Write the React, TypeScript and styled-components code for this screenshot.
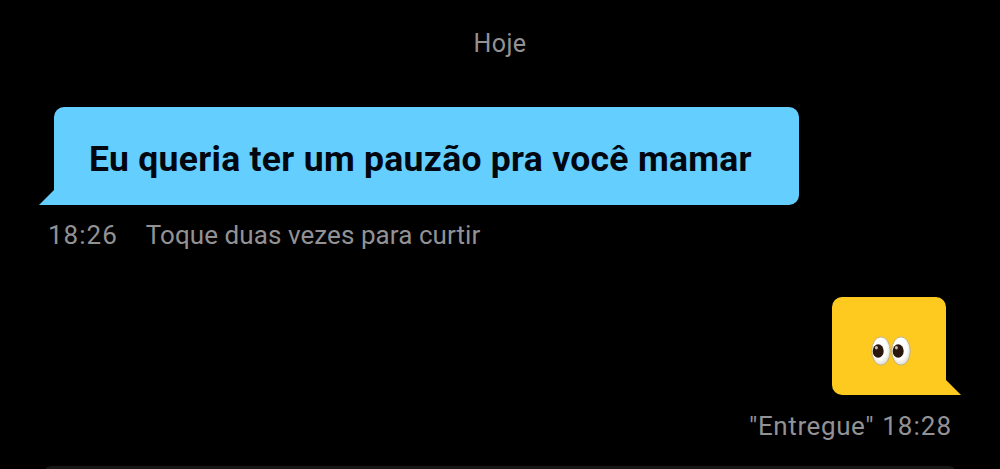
import React from 'react'
import styled, { createGlobalStyle } from 'styled-components'

const GlobalStyle = createGlobalStyle`
  * {
    box-sizing: border-box;
  }
  body {
    margin: 0;
    background: #000;
  }
`
const Chat = styled.main`
  display: flex;
  flex-direction: column;
  height: 469px;
  overflow: hidden;
  background: #000;
  font-family: Roboto, 'Liberation Sans', sans-serif;
`
const Day = styled.div`
  margin-top: 28px;
  height: 32px;
  line-height: 32px;
  text-align: center;
  font-size: 25px;
  letter-spacing: 0.4px;
  color: #929295;
`
const Message = styled.section<{ $mine?: boolean }>`
  display: flex;
  flex-direction: column;
  align-items: ${({ $mine }) => ($mine ? 'flex-end' : 'flex-start')};
  padding: ${({ $mine }) => ($mine ? '0 54px 0 0' : '0 0 0 54px')};
  margin-top: ${({ $mine }) => ($mine ? '46px' : '47px')};
`
const Bubble = styled.div<{ $mine?: boolean }>`
  position: relative;
  display: flex;
  align-items: center;
  width: ${({ $mine }) => ($mine ? '114px' : '745px')};
  height: 98px;
  padding: ${({ $mine }) => ($mine ? '9px 0 0 38px' : '6px 0 0 35px')};
  border-radius: ${({ $mine }) => ($mine ? '10px 10px 0 10px' : '10px 10px 10px 0')};
  background: ${({ $mine }) => ($mine ? '#ffca1f' : '#64ceff')};

  &::after {
    content: '';
    position: absolute;
    bottom: 0;
    ${({ $mine }) => ($mine ? 'right: -15px' : 'left: -15px')};
    width: 16px;
    height: 16px;
    background: inherit;
    clip-path: ${({ $mine }) =>
      $mine ? 'polygon(0 0, 100% 100%, 0 100%)' : 'polygon(100% 0, 100% 100%, 0 100%)'};
  }
`
const Text = styled.p`
  margin: 0;
  white-space: nowrap;
  font-size: 35.5px;
  font-weight: 700;
  letter-spacing: 0.29px;
  color: #02060f;
`
const Meta = styled.div<{ $mine?: boolean }>`
  display: flex;
  gap: ${({ $mine }) => ($mine ? '8px' : '28px')};
  margin: ${({ $mine }) => ($mine ? '15px -6px 0 0' : '14px 0 0 -6px')};
  height: 32px;
  line-height: 32px;
  white-space: nowrap;
  font-size: 26px;
  color: #929295;
`
const Time = styled.time`
  letter-spacing: 1px;
`
const Note = styled.span<{ $spacing: number }>`
  letter-spacing: ${({ $spacing }) => $spacing}px;
`
const Composer = styled.footer`
  flex: none;
  height: 40px;
  margin: 24px 42px 0;
  border-radius: 10px 10px 0 0;
  background: #171717;
`

function Eyes() {
  return (
    <svg width="42" height="32" viewBox="0 0 42 32" role="img" aria-label="👀">
      <defs>
        <radialGradient id="ball" cx="45%" cy="42%" r="60%">
          <stop offset="0.6" stopColor="#fff" />
          <stop offset="1" stopColor="#d9d8cf" />
        </radialGradient>
      </defs>
      {[11, 31].map((x) => (
        <g key={x}>
          <ellipse cx={x} cy="16" rx="9.3" ry="14.2" fill="url(#ball)" stroke="#c5b276" />
          <ellipse cx={x - 2.8} cy="16" rx="5.5" ry="6.8" fill="#2b160d" />
          <ellipse cx={x - 4.6} cy="12.8" rx="1.5" ry="1.8" fill="#c9bfb8" />
        </g>
      ))}
    </svg>
  )
}

export default function App() {
  return (
    <>
      <GlobalStyle />
      <Chat>
        <Day>Hoje</Day>
        <Message>
          <Bubble>
            <Text>Eu queria ter um pauzão pra você mamar</Text>
          </Bubble>
          <Meta>
            <Time>18:26</Time>
            <Note $spacing={0.07}>Toque duas vezes para curtir</Note>
          </Meta>
        </Message>
        <Message $mine>
          <Bubble $mine>
            <Eyes />
          </Bubble>
          <Meta $mine>
            <Note $spacing={0.6}>"Entregue"</Note>
            <Time>18:28</Time>
          </Meta>
        </Message>
        <Composer />
      </Chat>
    </>
  )
}
